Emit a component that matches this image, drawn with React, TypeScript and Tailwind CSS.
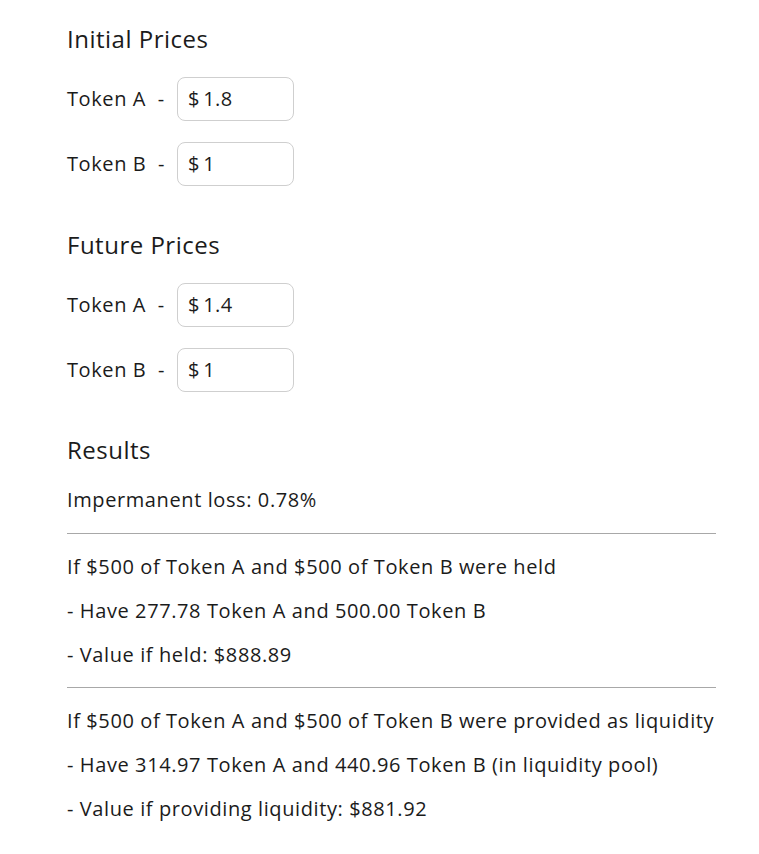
import React from 'react';

const font = { fontFamily: '"Open Sans", "DejaVu Sans", sans-serif' };

function PriceRow({ label, value }: { label: string; value: string }) {
  return (
    <div className="flex items-center h-[44px]">
      <span className="w-[110px] text-[20px] tracking-[0.6px]">{label}&nbsp; -</span>
      <div className="w-[117px] h-[44px] rounded-[8px] border border-[#cfcfcf] flex items-center pl-[10px] text-[20px] tracking-[0.3px]">
        $&thinsp;{value}
      </div>
    </div>
  );
}

export default function App() {
  return (
    <div className="bg-white text-[#1b1b1b] min-h-[854px] pl-[67px] pr-[43px] pt-[23px]" style={font}>
      <h2 className="text-[24px] leading-[32px] font-medium tracking-[0.5px]">Initial Prices</h2>
      <div className="mt-[22px]">
        <PriceRow label="Token A" value="1.8" />
      </div>
      <div className="mt-[21px]">
        <PriceRow label="Token B" value="1" />
      </div>

      <h2 className="mt-[43px] text-[24px] leading-[32px] font-medium tracking-[0.5px]">Future Prices</h2>
      <div className="mt-[22px]">
        <PriceRow label="Token A" value="1.4" />
      </div>
      <div className="mt-[21px]">
        <PriceRow label="Token B" value="1" />
      </div>

      <h2 className="mt-[42px] text-[24px] leading-[32px] font-medium tracking-[0.5px]">Results</h2>
      <div className="mt-[20px] text-[20px] leading-[28px] tracking-[0.6px]">
        <p>Impermanent loss: 0.78%</p>
        <hr className="mt-[19px] mb-[19px] border-[#a8a8a8]" />
        <div className="flex flex-col gap-[16px]">
          <p>If $500 of Token A and $500 of Token B were held</p>
          <p>- Have 277.78 Token A and 500.00 Token B</p>
          <p>- Value if held: $888.89</p>
        </div>
        <hr className="mt-[18px] mb-[19px] border-[#a8a8a8]" />
        <div className="flex flex-col gap-[16px]">
          <p>If $500 of Token A and $500 of Token B were provided as liquidity</p>
          <p>- Have 314.97 Token A and 440.96 Token B (in liquidity pool)</p>
          <p>- Value if providing liquidity: $881.92</p>
        </div>
      </div>
    </div>
  );
}
